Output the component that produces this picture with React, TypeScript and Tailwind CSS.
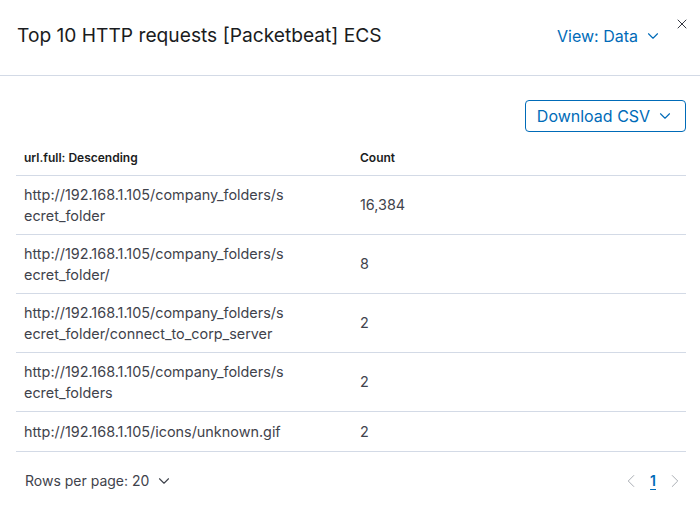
import { ChevronDown, ChevronLeft, ChevronRight, X } from "lucide-react"

type Row = { readonly url: string; readonly count: string }

const rows: readonly Row[] = [
  { url: "http://192.168.1.105/company_folders/secret_folder", count: "16,384" },
  { url: "http://192.168.1.105/company_folders/secret_folder/", count: "8" },
  { url: "http://192.168.1.105/company_folders/secret_folder/connect_to_corp_server", count: "2" },
  { url: "http://192.168.1.105/company_folders/secret_folders", count: "2" },
  { url: "http://192.168.1.105/icons/unknown.gif", count: "2" },
]

export default function App() {
  return (
    <div className="h-[512px] w-[700px] overflow-hidden bg-white font-['Inter',sans-serif] text-[#3f434c]">
      <header className="relative flex h-[76px] items-center justify-between border-b border-[#d3dae6] pb-[4px] pl-[17px] pr-[38px]">
        <h1 className="text-[19.2px] leading-none text-[#1a1c21]">
          Top 10 HTTP requests [Packetbeat] ECS
        </h1>
        <button type="button" className="flex items-center gap-[6px] text-[16px] text-[#006bb8]">
          View: Data
          <ChevronDown size={18} strokeWidth={1.5} />
        </button>
        <button type="button" aria-label="Close" className="absolute right-[10px] top-[16px] text-[#343741]">
          <X size={16} strokeWidth={1.5} />
        </button>
      </header>

      <div className="pl-4 pr-[14px] pt-6">
        <div className="flex justify-end">
          <button
            type="button"
            className="flex h-[32px] w-[161px] items-center justify-center gap-[6px] rounded-[4px] border border-[#006bb8] text-[16px] text-[#006bb8]"
          >
            Download CSV
            <ChevronDown size={18} strokeWidth={1.5} />
          </button>
        </div>

        <table className="mt-[9px] w-[670px] border-collapse text-left text-[14.4px]">
          <thead>
            <tr className="border-b border-[#d3dae6]">
              <th className="h-[34px] w-[336px] px-2 text-[12px] font-semibold text-[#1a1c21]">
                url.full: Descending
              </th>
              <th className="px-2 text-[12px] font-semibold text-[#1a1c21]">Count</th>
            </tr>
          </thead>
          <tbody>
            {rows.map((row) => (
              <tr key={row.url} className="border-b border-[#d3dae6]">
                <td className="h-[40px] px-2 py-2 align-middle">
                  <div className="w-[266px] break-all leading-[21px]">{row.url}</div>
                </td>
                <td className="px-2 py-2 align-middle leading-[21px]">{row.count}</td>
              </tr>
            ))}
          </tbody>
        </table>

        <div className="mt-[18px] flex items-center justify-between pl-[9px] pr-0 text-[14px]">
          <button type="button" className="flex items-center gap-[6px]">
            Rows per page: 20
            <ChevronDown size={18} strokeWidth={1.5} />
          </button>
          <div className="flex items-center gap-[4px]">
            <ChevronLeft size={22} strokeWidth={1} className="text-[#a2a6ad]" />
            <span className="px-1 font-semibold text-[#006bb8] underline underline-offset-[3px]">1</span>
            <ChevronRight size={22} strokeWidth={1} className="text-[#a2a6ad]" />
          </div>
        </div>
      </div>
    </div>
  )
}
